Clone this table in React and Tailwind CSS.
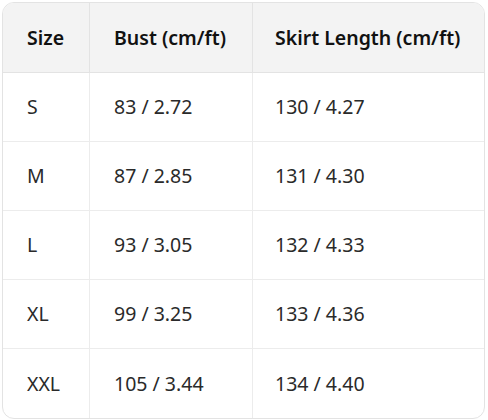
const rows = [
  ['S', '83 / 2.72', '130 / 4.27'],
  ['M', '87 / 2.85', '131 / 4.30'],
  ['L', '93 / 3.05', '132 / 4.33'],
  ['XL', '99 / 3.25', '133 / 4.36'],
  ['XXL', '105 / 3.44', '134 / 4.40'],
];

export default function App() {
  return (
    <div className="bg-white w-[488px] h-[420px] pt-[2px] pl-[2px]" style={{ fontFamily: '"Noto Sans", "Open Sans", sans-serif' }}>
      <div className="w-[483px] rounded-xl border border-[#e3e3e3] overflow-hidden">
        <table className="w-full table-fixed border-separate border-spacing-0 text-[19.5px]">
          <colgroup>
            <col className="w-[86px]" />
            <col className="w-[163px]" />
            <col />
          </colgroup>
          <thead>
            <tr className="bg-[#f3f3f3] text-[#111]">
              <th className="h-[70px] text-left font-semibold pl-6 border-b border-[#e3e3e3]">Size</th>
              <th className="text-left font-semibold pl-6 border-b border-l border-[#e3e3e3]">Bust (cm/ft)</th>
              <th className="text-left font-semibold pl-[22px] border-b border-l border-[#e3e3e3]">Skirt Length (cm/ft)</th>
            </tr>
          </thead>
          <tbody className="text-[#2a2a2a]">
            {rows.map((r, i) => {
              const b = i < rows.length - 1 ? 'border-b' : '';
              return (
                <tr key={r[0]}>
                  <td className={`h-[69px] pl-6 border-[#ececec] ${b}`}>{r[0]}</td>
                  <td className={`pl-6 border-l border-[#ececec] ${b}`}>{r[1]}</td>
                  <td className={`pl-[22px] border-l border-[#ececec] ${b}`}>{r[2]}</td>
                </tr>
              );
            })}
          </tbody>
        </table>
      </div>
    </div>
  );
}
